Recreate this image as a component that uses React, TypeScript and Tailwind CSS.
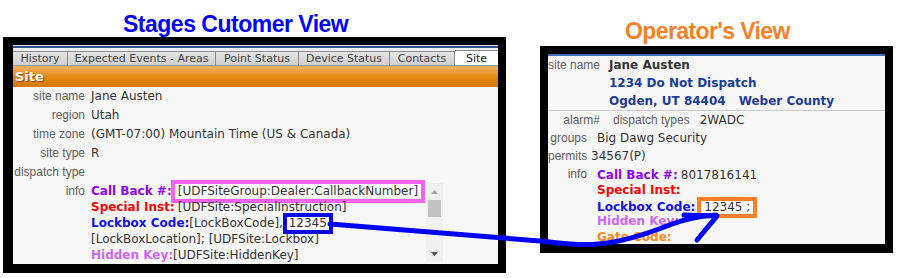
const label = "font-['Liberation_Sans',Arial,sans-serif] text-[12px] text-[#5f5f5f] whitespace-nowrap";
const value = "font-['DejaVu_Sans',Verdana,sans-serif] text-[12px] text-[#333] whitespace-nowrap";
const bold = "font-['DejaVu_Sans',Verdana,sans-serif] text-[12px] font-bold whitespace-nowrap";

const tabs = [
  { name: "History", w: "w-[55px]" },
  { name: "Expected Events - Areas", w: "w-[148px]" },
  { name: "Point Status", w: "w-[83px]" },
  { name: "Device Status", w: "w-[91px]" },
  { name: "Contacts", w: "w-[65px]" },
];

function SiteRow({ name, children }: { name: string; children?: React.ReactNode }) {
  return (
    <div className="flex h-[18.8px] items-center">
      <span className={`w-[72px] text-right ${label}`}>{name}</span>
      <span className={`ml-[6px] ${value}`}>{children}</span>
    </div>
  );
}

function StagesPanel() {
  return (
    <div className="w-[503px] border-t-[8px] border-l-[10px] border-r-[8px] border-b-[9px] border-black bg-[#f7f7f7]">
      <div className="h-[219px] overflow-hidden">
        <div className="h-[1px] bg-[#dfe4ec]" />
        <div className="h-[2px] bg-[#2f4f8c]" />
        <div className="h-[3px] bg-[#eef0f3]" />
        <div className="flex h-[15px] items-end border-b border-[#9a9a9a] bg-[#f2f2f2]">
          {tabs.map((t) => (
            <div
              key={t.name}
              className={`flex h-[14px] ${t.w} items-center justify-center whitespace-nowrap border-r border-t border-[#8c8c8c] bg-gradient-to-b from-[#e4e4e4] to-[#cfcfcf] font-['DejaVu_Sans',Verdana,sans-serif] text-[11px] leading-none text-[#444]`}
            >
              {t.name}
            </div>
          ))}
          <div className="flex h-[15px] flex-1 items-center justify-center border-t border-[#8c8c8c] bg-white font-['DejaVu_Sans',Verdana,sans-serif] text-[11px] leading-none text-[#222]">
            Site
          </div>
        </div>
        <div className="flex h-[21px] items-center bg-gradient-to-b from-[#f4b35e] via-[#e58a14] to-[#d77700] px-[2px] font-['DejaVu_Sans',Verdana,sans-serif] text-[13px] font-bold text-white [text-shadow:1px_1px_1px_#7a4000]">
          Site
        </div>
        <SiteRow name="site name">Jane Austen</SiteRow>
        <SiteRow name="region">Utah</SiteRow>
        <SiteRow name="time zone">(GMT-07:00) Mountain Time (US &amp; Canada)</SiteRow>
        <SiteRow name="site type">R</SiteRow>
        <SiteRow name="dispatch type" />
        <div className="mt-[2px] flex text-[12px] leading-[16px]">
          <div className={`w-[72px] text-right leading-[16px] ${label}`}>info</div>
          <div className="ml-[6px] flex h-[79px] w-[352px]">
            <div className="flex-1 text-[12px] leading-[16px]">
              <div className="h-[16px]">
                <span className={`${bold} text-[#8f00ff]`}>Call Back #:</span>{" "}
                <span className={`${value} inline-block bg-white px-[3px] leading-[15px] outline-4 outline-[#f862f4]`}>
                  [UDFSiteGroup:Dealer:CallbackNumber]
                </span>
              </div>
              <div className="h-[16px]">
                <span className={`${bold} text-[#ff0000]`}>Special Inst:</span>{" "}
                <span className={value}>[UDFSite:SpecialInstruction]</span>
              </div>
              <div className="h-[16px]">
                <span className={`${bold} text-[#1010f0]`}>Lockbox Code:</span>
                <span className={value}>[LockBoxCode], </span>
                <span className={`${value} inline-block bg-white px-[2px] leading-[13px] outline-4 outline-[#0000e0]`}>12345</span>
              </div>
              <div className="h-[16px]">
                <span className={value}>[LockBoxLocation]; [UDFSite:Lockbox]</span>
              </div>
              <div className="h-[16px]">
                <span className={`${bold} text-[#cc66ff]`}>Hidden Key:</span>
                <span className={value}>[UDFSite:HiddenKey]</span>
              </div>
            </div>
            <div className="flex w-[17px] flex-col items-center bg-[#f0f0f0]">
              <svg width="17" height="17" viewBox="0 0 17 17">
                <path d="M5 11 L8.5 7 L12 11 Z" fill="#a3a3a3" />
              </svg>
              <div className="h-[17px] w-[13px] bg-[#c1c1c1]" />
              <div className="flex-1" />
              <svg width="17" height="17" viewBox="0 0 17 17">
                <path d="M5 7 L8.5 11 L12 7 Z" fill="#505050" />
              </svg>
            </div>
          </div>
        </div>
      </div>
    </div>
  );
}

function OperatorPanel() {
  return (
    <div className="w-[353px] border-t-[8px] border-l-[8px] border-r-[8px] border-b-[9px] border-black bg-[#f7f7f7]">
      <div className="h-[190px] overflow-hidden text-[12px]">
        <div className="h-[2px] bg-[#3f6fb8]" />
        <div className="flex h-[18px] items-center">
          <span className={`w-[52px] text-right ${label}`}>site name</span>
          <span className={`ml-[9px] ${bold} text-[#333]`}>Jane Austen</span>
        </div>
        <div className={`h-[18px] pl-[61px] leading-[18px] ${bold} text-[#1c3c9a]`}>1234 Do Not Dispatch</div>
        <div className={`h-[18px] pl-[61px] leading-[18px] ${bold} text-[#1c3c9a]`}>
          Ogden, UT 84404<span className="ml-[13px]">Weber County</span>
        </div>
        <div className="h-[1px] bg-[#c8c8c8]" />
        <div className="flex h-[18px] items-center">
          <span className={`w-[52px] text-right ${label}`}>alarm#</span>
          <span className={`ml-[13px] ${label}`}>dispatch types</span>
          <span className={`ml-[10px] ${value}`}>2WADC</span>
        </div>
        <div className="flex h-[18px] items-center">
          <span className={`w-[39px] text-right ${label}`}>groups</span>
          <span className={`ml-[10px] ${value}`}>Big Dawg Security</span>
        </div>
        <div className="flex h-[18px] items-center">
          <span className={`w-[39px] text-right ${label}`}>permits</span>
          <span className={`ml-[4px] ${value}`}>34567(P)</span>
        </div>
        <div className="mt-[2px] flex leading-[15.8px]">
          <span className={`w-[39px] text-right leading-[15.8px] ${label}`}>info</span>
          <div className="ml-[10px]">
            <div className="h-[15.8px]">
              <span className={`${bold} text-[#8f00ff]`}>Call Back #:</span>{" "}
              <span className={value}>8017816141</span>
            </div>
            <div className={`h-[15.8px] ${bold} text-[#ff0000]`}>Special Inst:</div>
            <div className="h-[15.8px]">
              <span className={`${bold} text-[#1010f0]`}>Lockbox Code:</span>
              <span className={`${value} ml-[6px] inline-block bg-white px-[3px] leading-[13px] outline-4 outline-[#ff7f27]`}>
                12345 ;
              </span>
            </div>
            <div className={`h-[15.8px] ${bold} text-[#cc66ff]`}>Hidden Key:</div>
            <div className={`h-[15.8px] ${bold} text-[#ff8a1c]`}>Gate Code:</div>
          </div>
        </div>
      </div>
    </div>
  );
}

export default function App() {
  return (
    <div className="relative h-[278px] w-[897px] overflow-hidden bg-white">
      <div className="flex">
        <div className="ml-[3px] flex flex-col">
          <div className="h-[37px] whitespace-nowrap pl-[120px] pt-[13px] font-['Liberation_Sans',Arial,sans-serif] text-[23px] font-bold leading-none tracking-[-0.5px] text-[#0000ff]">
            Stages Cutomer View
          </div>
          <StagesPanel />
        </div>
        <div className="ml-[34px] flex flex-col">
          <div className="h-[46px] whitespace-nowrap pl-[85px] pt-[20px] font-['Liberation_Sans',Arial,sans-serif] text-[23px] font-bold leading-none tracking-[-0.6px] text-[#ff7f27]">
            Operator's View
          </div>
          <OperatorPanel />
        </div>
      </div>
      <svg className="pointer-events-none absolute left-0 top-0" width="897" height="278" viewBox="0 0 897 278">
        <path
          d="M330 224 L540 241 C560 243 578 246 598 244 C625 242 652 232 672 224 C688 218 700 216 716 215"
          fill="none"
          stroke="#0000ff"
          strokeWidth="5"
          strokeLinecap="round"
        />
        <path d="M684 215 L717 216 L697 240" fill="none" stroke="#0000ff" strokeWidth="5" strokeLinecap="round" strokeLinejoin="round" />
      </svg>
    </div>
  );
}
